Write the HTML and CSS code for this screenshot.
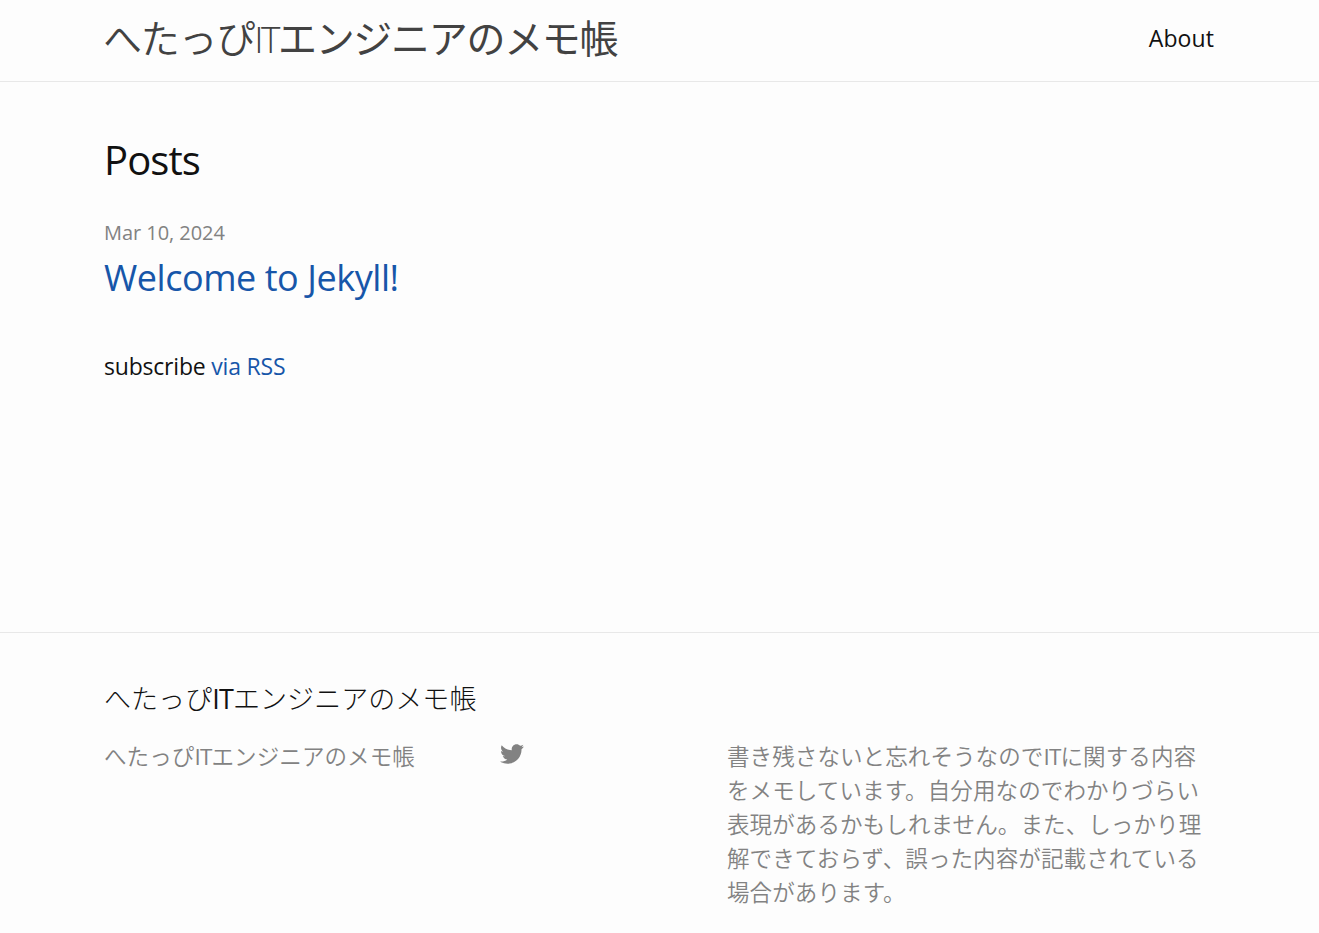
FILE: index.html
```html
<!DOCTYPE html>
<html lang="ja">
<head>
<meta charset="utf-8">
<title>へたっぴITエンジニアのメモ帳</title>
<link rel="stylesheet" href="styles.css">
</head>
<body>
<header class="site-header">
  <div class="wrapper header-row">
    <a class="site-title"><span class="t1">へたっぴ</span><span class="t2">IT</span><span class="t3">エンジニアのメモ帳</span></a>
    <nav><a class="page-link">About</a></nav>
  </div>
</header>
<main class="page-content">
  <div class="wrapper">
    <h2 class="post-list-heading">Posts</h2>
    <p class="post-meta">Mar 10, 2024</p>
    <h3 class="post-title"><a>Welcome to Jekyll!</a></h3>
    <p class="rss-subscribe">subscribe <a class="rss">via RSS</a></p>
  </div>
</main>
<footer class="site-footer">
  <div class="wrapper">
    <h2 class="footer-heading">へたっぴ<span class="latin">IT</span>エンジニアのメモ帳</h2>
    <div class="footer-cols">
      <div class="col-name">へたっぴ<span class="latin">IT</span>エンジニアのメモ帳</div>
      <div class="col-social"><svg class="icon" viewBox="0 0 16 16"><path d="M15.969 3.058c-.586.26-1.217.436-1.878.515.675-.405 1.194-1.045 1.438-1.809-.632.375-1.332.647-2.076.793-.596-.636-1.446-1.033-2.387-1.033-1.806 0-3.27 1.464-3.27 3.27 0 .256.029.506.085.745C5.163 5.404 2.753 4.102 1.14 2.124c-.281.482-.442 1.044-.442 1.643 0 1.134.577 2.135 1.455 2.722-.536-.017-1.04-.164-1.481-.409v.041c0 1.584 1.127 2.906 2.623 3.206-.274.075-.563.114-.861.114-.211 0-.416-.02-.615-.058.416 1.299 1.624 2.245 3.055 2.271-1.119.877-2.529 1.4-4.061 1.4-.264 0-.524-.015-.78-.046 1.447.928 3.166 1.469 5.013 1.469 6.015 0 9.304-4.983 9.304-9.304 0-.142-.003-.283-.009-.423.639-.461 1.193-1.037 1.632-1.692z"/></svg></div>
      <p class="col-text">
        <span class="line first">書き残さないと忘れそうなので<span class="latin">IT</span>に関する内容</span>
        <span class="line">をメモしています。自分用なのでわかりづらい</span>
        <span class="line">表現があるかもしれません。また、しっかり理</span>
        <span class="line">解できておらず、誤った内容が記載されている</span>
        <span class="line">場合があります。</span>
      </p>
    </div>
  </div>
</footer>
</body>
</html>
```
FILE: styles.css
```css
* { box-sizing: border-box; margin: 0; padding: 0; }
body {
  height: 933px;
  overflow: hidden;
  display: flex;
  flex-direction: column;
  background: #fdfdfd;
  color: #111;
  font: 24px/36px "Open Sans", "Noto Sans CJK JP", sans-serif;
}
h2, h3 { font-weight: 400; }
.wrapper { padding: 0 105px 0 104px; }
.site-header { height: 82px; border-bottom: 1px solid #e8e8e8; }
.header-row { display: flex; justify-content: space-between; height: 76px; align-items: center; }
.site-title { font-size: 39px; color: #424242; white-space: nowrap; letter-spacing: -1.3px; margin-left: -1px; }
.t1 { font-weight: 350; letter-spacing: -1.2px; }
.t2 { font-weight: 300; font-size: 37px; letter-spacing: -2.5px; }
.t3 { font-weight: 400; }
.page-link { font-size: 23px; letter-spacing: .1px; }
.page-content { height: 550px; padding-top: 48px; }
.post-list-heading { font-size: 40px; line-height: 60px; letter-spacing: -.9px; }
.post-meta { font-size: 20px; line-height: 30px; color: #828282; margin-top: 28px; letter-spacing: -.05px; }
.post-title { font-size: 36px; line-height: 54px; color: #1756a9; margin-top: 3px; letter-spacing: -.45px; }
.rss-subscribe { font-size: 23px; line-height: 34px; margin-top: 44px; letter-spacing: -.2px; }
.rss { color: #1756a9; }
.site-footer { border-top: 1px solid #e8e8e8; padding-top: 48px; }
.footer-heading { font-size: 27px; font-weight: 300; line-height: 36px; margin-bottom: 23px; white-space: nowrap; letter-spacing: .05px; }
.footer-cols { display: grid; grid-template-columns: 396px 227px 480px; color: #828282; font-size: 22.5px; line-height: 34px; font-weight: 350; }
.col-name { letter-spacing: .1px; }
.latin { font-weight: 400; letter-spacing: -.8px; }
.icon { display: block; width: 24px; height: 24px; fill: #828282; margin-top: 2px; }
.line { display: block; white-space: nowrap; letter-spacing: .12px; }
.first { letter-spacing: .1px; }
```
